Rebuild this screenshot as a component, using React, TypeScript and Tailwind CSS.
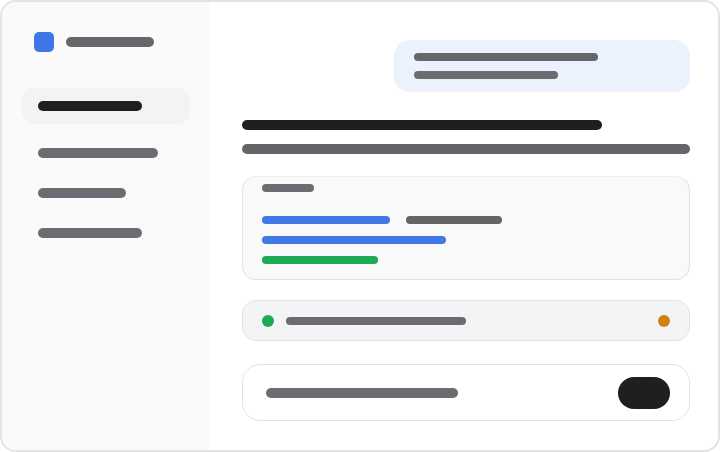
import React from 'react'

const navBars = ['w-[120px]', 'w-[88px]', 'w-[104px]']

export default function App() {
  return (
    <div className="h-[452px] w-[720px] bg-white">
      <div className="flex h-full w-full overflow-hidden rounded-2xl border-2 border-[#e3e3e3] bg-white">
        {/* Sidebar */}
        <aside className="flex w-[208px] shrink-0 flex-col bg-[#fafafa] px-5 pt-[30px]">
          <div className="flex items-center gap-3 px-3">
            <div className="h-5 w-5 rounded-[5px] bg-[#3f77e6]" />
            <div className="h-[10px] w-[88px] rounded-full bg-[#66676b]" />
          </div>

          <nav className="mt-9 flex flex-col">
            <div className="flex h-9 items-center rounded-xl bg-[#f3f3f3] px-4">
              <div className="h-[10px] w-[104px] rounded-full bg-[#1f1f1f]" />
            </div>
            <div className="mt-[9px] flex flex-col">
              {navBars.map((w) => (
                <div key={w} className="flex h-10 items-center px-4">
                  <div className={`h-[10px] rounded-full bg-[#6b6c71] ${w}`} />
                </div>
              ))}
            </div>
          </nav>
        </aside>

        {/* Main */}
        <main className="flex flex-1 flex-col pl-8 pr-[28px] pt-[38px]">
          <div className="flex h-[52px] w-[296px] flex-col justify-center gap-[10px] self-end rounded-2xl bg-[#ebf1fd] px-5">
            <div className="h-2 w-[184px] rounded-full bg-[#66676b]" />
            <div className="h-2 w-[144px] rounded-full bg-[#6b6c71]" />
          </div>

          <div className="mt-7 h-[10px] w-[360px] rounded-full bg-[#1f1f1f]" />
          <div className="mt-[14px] h-[10px] w-full rounded-full bg-[#646569]" />

          {/* Card */}
          <div className="mt-[22px] flex h-[104px] flex-col rounded-[14px] border border-[#e2e2e2] border-t-[#eeeeee] bg-[#f9f9f9] px-[19px] pt-[7px]">
            <div className="h-2 w-[52px] rounded-full bg-[#6b6c71]" />
            <div className="mt-6 flex items-center gap-4">
              <div className="h-2 w-[128px] rounded-full bg-[#4078e6]" />
              <div className="h-2 w-[96px] rounded-full bg-[#646569]" />
            </div>
            <div className="mt-3 h-2 w-[184px] rounded-full bg-[#4078e6]" />
            <div className="mt-3 h-2 w-[116px] rounded-full bg-[#1faa55]" />
          </div>

          {/* Status row */}
          <div className="mt-5 flex h-[41px] items-center rounded-[14px] border border-[#e2e2e2] bg-[#f3f4f6] px-[19px]">
            <div className="h-3 w-3 rounded-full bg-[#1faa55]" />
            <div className="ml-3 h-2 w-[180px] rounded-full bg-[#6b6c71]" />
            <div className="ml-auto h-3 w-3 rounded-full bg-[#d0820e]" />
          </div>

          {/* Input row */}
          <div className="mt-[23px] flex h-[57px] items-center rounded-[18px] border border-[#e2e2e2] bg-white pl-[23px] pr-[19px]">
            <div className="h-[10px] w-[192px] rounded-full bg-[#6b6c71]" />
            <div className="ml-auto h-8 w-[52px] rounded-full bg-[#1f1f1f]" />
          </div>
        </main>
      </div>
    </div>
  )
}
